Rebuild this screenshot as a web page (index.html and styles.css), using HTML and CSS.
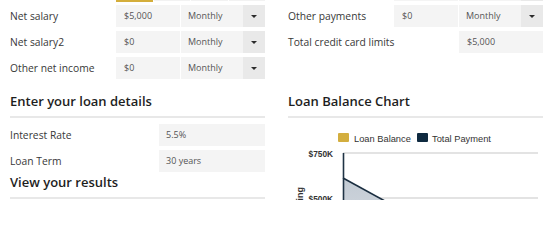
FILE: index.html
```html
<!DOCTYPE html>
<html lang="en">
<head>
<meta charset="utf-8">
<title>Affordability calculator</title>
<link rel="stylesheet" href="styles.css">
</head>
<body>
<div class="page">
  <div class="group">
    <div class="row">
      <span class="label"></span>
      <div class="seg"><span class="on"></span><span></span><span></span><span></span></div>
    </div>
    <div class="row">
      <span class="label">Net salary</span>
      <div class="field">$5,000</div>
      <div class="select"><span class="opt">Monthly</span><span class="arrow"><i class="caret"></i></span></div>
    </div>
    <div class="row">
      <span class="label">Net salary2</span>
      <div class="field">$0</div>
      <div class="select"><span class="opt">Monthly</span><span class="arrow"><i class="caret"></i></span></div>
    </div>
    <div class="row">
      <span class="label">Other net income</span>
      <div class="field">$0</div>
      <div class="select"><span class="opt">Monthly</span><span class="arrow"><i class="caret"></i></span></div>
    </div>
  </div>

  <div class="group">
    <div class="row">
      <span class="label"></span>
      <div class="field"></div>
      <div class="select"><span class="opt"></span><span class="arrow"></span></div>
    </div>
    <div class="row">
      <span class="label">Other payments</span>
      <div class="field">$0</div>
      <div class="select"><span class="opt">Monthly</span><span class="arrow"><i class="caret"></i></span></div>
    </div>
    <div class="row">
      <span class="label">Total credit card limits</span>
      <div class="spacer"></div>
      <div class="field wide">$5,000</div>
    </div>
  </div>

  <div class="section">
    <h2 class="heading">Enter your loan details</h2>
    <div class="rows">
      <div class="row">
        <span class="label long">Interest Rate</span>
        <div class="field mid">5.5%</div>
      </div>
      <div class="row">
        <span class="label long">Loan Term</span>
        <div class="field mid">30 years</div>
      </div>
    </div>
    <h2 class="heading tight">View your results</h2>
  </div>

  <div class="section">
    <h2 class="heading">Loan Balance Chart</h2>
    <svg class="chart" width="255" height="82" viewBox="0 0 255 82">
      <defs>
        <linearGradient id="fill" x1="0" y1="0" x2="0" y2="1">
          <stop offset="0" stop-color="#c3cbd4"/>
          <stop offset="1" stop-color="#e3e7eb"/>
        </linearGradient>
      </defs>
      <rect x="50" y="15" width="11" height="9" rx="1" fill="#d3ae3f"/>
      <text class="legend" x="66" y="23.5">Loan Balance</text>
      <rect x="129" y="15" width="11" height="9" rx="1" fill="#0f2a40"/>
      <text class="legend" x="144" y="23.5">Total Payment</text>
      <line x1="55" y1="35" x2="250" y2="35" stroke="#e3e3e3" stroke-width="2"/>
      <line x1="55" y1="80" x2="250" y2="80" stroke="#e3e3e3" stroke-width="2"/>
      <path d="M55 60 L250 167 L250 100 L55 100 Z" fill="url(#fill)"/>
      <path d="M55 60 L250 167" fill="none" stroke="#1a2e40" stroke-width="1.6"/>
      <line x1="55.5" y1="35" x2="55.5" y2="100" stroke="#1f3345" stroke-width="1.6"/>
      <text class="ylab" x="45" y="38.7" text-anchor="end">$750K</text>
      <text class="ylab" x="45" y="83.5" text-anchor="end">$500K</text>
      <text class="ytitle" transform="translate(15 69) rotate(-90)" text-anchor="end">Remaining</text>
    </svg>
  </div>
</div>
</body>
</html>
```

FILE: styles.css
```css
html, body {
  margin: 0;
  padding: 0;
  height: 200px;
  background: #ffffff;
  overflow: hidden;
}

body {
  font-family: "Open Sans", "Liberation Sans", sans-serif;
  color: #333333;
}

.page {
  display: grid;
  grid-template-columns: 255px 255px;
  column-gap: 23px;
  padding-left: 10px;
  margin-top: -21px;
  align-items: start;
}

.group {
  display: flex;
  flex-direction: column;
  gap: 4px;
}

.row {
  display: flex;
  height: 22px;
  align-items: flex-start;
}

.label {
  width: 106px;
  flex: none;
  font-size: 10.3px;
  line-height: 23px;
  color: #383838;
  white-space: nowrap;
}

.label.long {
  width: 149px;
}

.field {
  width: 64px;
  height: 22px;
  flex: none;
  box-sizing: border-box;
  padding-left: 8px;
  background: #f4f4f4;
  font-size: 9px;
  line-height: 22px;
  color: #555555;
}

.field.wide {
  width: 84px;
  margin-left: 1px;
}

.field.mid {
  width: 106px;
  padding-left: 7px;
}

.spacer {
  width: 64px;
  flex: none;
}

.select {
  display: flex;
  margin-left: 1px;
  height: 22px;
}

.opt {
  width: 62px;
  box-sizing: border-box;
  padding-left: 7px;
  background: #f4f4f4;
  font-size: 9px;
  line-height: 22px;
  color: #555555;
}

.arrow {
  width: 22px;
  background: #e9e9e9;
  display: flex;
  align-items: center;
  justify-content: center;
}

.caret {
  width: 0;
  height: 0;
  border-left: 3px solid transparent;
  border-right: 3px solid transparent;
  border-top: 3px solid #2b2b2b;
}

.seg {
  display: flex;
  gap: 1px;
  width: 149px;
  height: 22px;
}

.seg span {
  flex: 1;
  background: #f2f2f2;
}

.seg .on {
  background: #f2f2f2;
  box-shadow: inset 0 -1px 0 #d4ae3b, 0 1px 0 #d4ae3b;
}

.section {
  display: flex;
  flex-direction: column;
}

.heading {
  margin: 13px 0 0 0;
  padding-bottom: 6px;
  border-bottom: 2px solid #e8e8e8;
  font-size: 13px;
  font-weight: 600;
  line-height: 18px;
  color: #1e1e1e;
}

.heading.tight {
  margin-top: 1px;
}

.rows {
  display: flex;
  flex-direction: column;
  gap: 4px;
  margin-top: 6px;
}

.chart {
  display: block;
}

.legend {
  font-family: "Liberation Sans", Arial, sans-serif;
  font-size: 9.3px;
  fill: #333333;
}

.ylab {
  font-family: "Liberation Sans", Arial, sans-serif;
  font-size: 8.3px;
  font-weight: bold;
  fill: #333333;
}

.ytitle {
  font-family: "Liberation Sans", Arial, sans-serif;
  font-size: 9px;
  font-weight: bold;
  fill: #333333;
}
```
